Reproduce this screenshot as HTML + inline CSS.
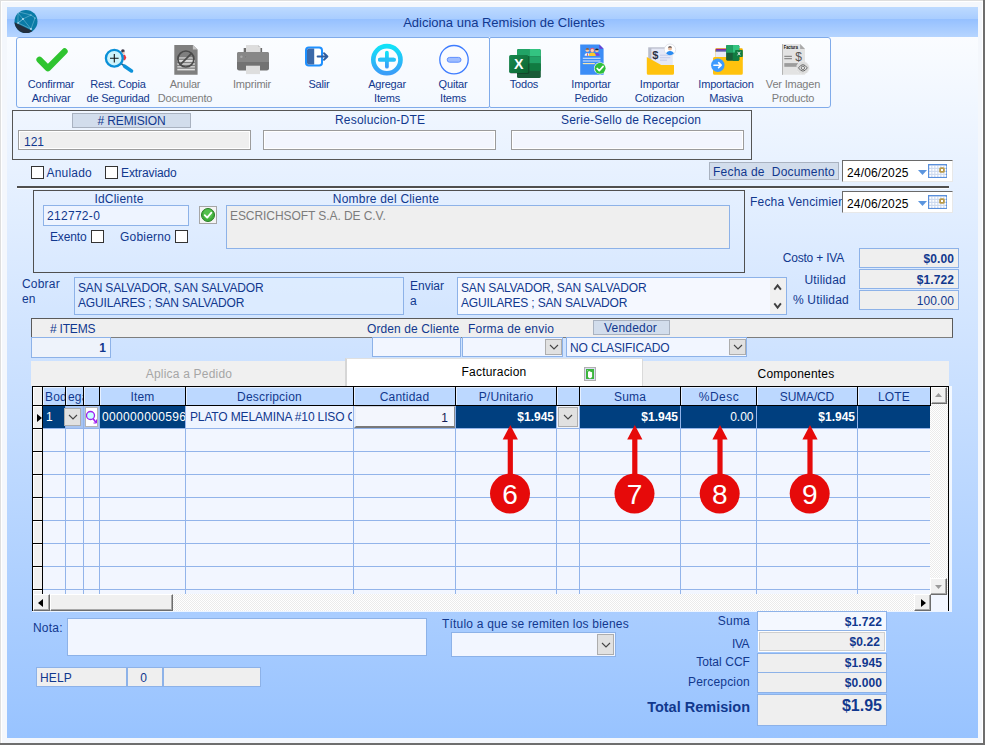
<!DOCTYPE html>
<html lang="es">
<head>
<meta charset="utf-8">
<title>Adiciona una Remision de Clientes</title>
<style>
*{box-sizing:border-box;margin:0;padding:0}
html,body{width:985px;height:745px;overflow:hidden;background:#f4f7fc}
body{position:relative;font-family:"Liberation Sans",Arial,sans-serif;font-size:12px;color:#11388e;line-height:14px}
.a{position:absolute}
.t{position:absolute;white-space:nowrap;letter-spacing:.2px}
.c{text-align:center}
.r{text-align:right}
.b{font-weight:bold}
.g{color:#7c7c7c}
.tb{position:absolute;top:77px;width:80px;font-size:11px;line-height:14px;text-align:center;white-space:nowrap;letter-spacing:-.2px}
.lbl{position:absolute;background:#d2ddec;border:1px solid #a9b2c0;text-align:center;white-space:nowrap;letter-spacing:.2px}
.fld{position:absolute;border:1px solid #8db2e8;background:#f2f6ff;white-space:nowrap;overflow:hidden}
.gry{background:#efefef}
.cb{position:absolute;width:13px;height:13px;background:#fff;border:1px solid #333}
.drop{position:absolute;background:#e1e1e1;border:1px solid #adadad}
.drop svg{position:absolute;left:50%;top:50%;margin:-3px 0 0 -5px}
.num{position:absolute;white-space:nowrap;text-align:right;font-weight:bold;letter-spacing:.1px}
.date{width:111px;height:22px;background:#fff;border:1px solid #6a6a6a;border-right-color:#e8e8e8;border-bottom-color:#e8e8e8;color:#000}
.date span{position:absolute;left:4px;top:5px;letter-spacing:.15px}
.date .tri{position:absolute;left:75px;top:9px;width:9px;height:5px;background:#5b95de;clip-path:polygon(0 0,100% 0,50% 100%)}
.date svg{position:absolute;left:85px;top:3px}
</style>
</head>
<body>
<!-- window frame -->
<div class="a" style="left:0;top:0;width:985px;height:745px;background:#f4f7fc"></div>
<div class="a" style="left:0;top:0;width:985px;height:1px;background:#dedede"></div>
<div class="a" style="left:0;top:0;width:1px;height:745px;background:#dedede"></div>
<div class="a" style="left:1px;top:1px;width:982px;height:1px;background:#fff"></div>
<div class="a" style="left:1px;top:1px;width:1px;height:742px;background:#fff"></div>
<div class="a" style="left:982px;top:1px;width:1px;height:742px;background:#fff"></div>
<div class="a" style="left:983px;top:0;width:2px;height:745px;background:#6e6e6e"></div>
<div class="a" style="left:0;top:743px;width:985px;height:2px;background:#6e6e6e"></div>
<!-- title bar -->
<div class="a" style="left:7px;top:7px;width:971px;height:30px;background:linear-gradient(#bddaff 0,#a9cdff 39%,#95c0ff 40%,#b6d5ff 100%)"></div>
<!-- body -->
<div class="a" id="bodybg" style="left:7px;top:37px;width:971px;height:701px;background:linear-gradient(#fafcff,#98c3ff)"></div>
<div class="t c" style="left:304px;top:15px;width:400px;font-size:13px;line-height:15px;letter-spacing:0">Adiciona una Remision de Clientes</div>
<!-- app icon -->
<svg class="a" style="left:13px;top:9px" width="26" height="26" viewBox="0 0 26 26">
<defs><clipPath id="gc"><circle cx="13" cy="12.5" r="11.5"/></clipPath></defs>
<circle cx="13" cy="12.5" r="11.5" fill="#0a7ba6"/>
<g clip-path="url(#gc)"><path d="M0 12.600 L20 22.200 L8 30 L-4 22Z" fill="#232f3e"/>
<g stroke="#9fd4ea" stroke-width=".6" fill="none" opacity=".7"><path d="M5 4L10 10L18 6L22 9L18 20L10 10L5 14L5 4M5 14L18 20M10 10L5 14M6 3L18 6"/></g>
<g fill="#bfe3f3"><circle cx="10" cy="10" r=".9"/><circle cx="5" cy="14" r=".8"/><circle cx="18" cy="20" r=".9"/><circle cx="18" cy="6" r=".6"/><circle cx="22" cy="9" r=".6"/></g></g>
</svg>
<!-- toolbar groups -->
<div class="a" style="left:16px;top:37px;width:474px;height:71px;border:1px solid #80abea;border-radius:3px 2px 2px 3px;background:rgba(255,255,255,.25)"></div>
<div class="a" style="left:489px;top:37px;width:342px;height:71px;border:1px solid #80abea;border-radius:2px 3px 3px 2px;background:rgba(255,255,255,.25)"></div>
<svg class="a" style="left:16px;top:40px" width="815" height="40" viewBox="16 40 815 40">
<defs>
<linearGradient id="gAdd" x1="0" y1="0" x2="0" y2="1"><stop offset="0" stop-color="#12e2f8"/><stop offset="1" stop-color="#3a9df8"/></linearGradient>
<linearGradient id="gXl" x1="0" y1="0" x2="1" y2="1"><stop offset="0" stop-color="#18884f"/><stop offset="1" stop-color="#0b6631"/></linearGradient>
</defs>
<!-- confirmar: check -->
<path d="M39.500 59.800L47.900 68.300L64.600 51.400" fill="none" stroke="#2fc430" stroke-width="6.200" stroke-linecap="round" stroke-linejoin="round"/>
<!-- rest copia: magnifier -->
<circle cx="122.900" cy="51.100" r="1.800" fill="#3b3547"/><circle cx="123.500" cy="52.900" r="1.200" fill="#e9c3b3"/><path d="M123.200 54.800h1.800l1.300 3l-1.300 2.400h-1.800z" fill="#e8383d"/>
<path d="M121.200 63.700L124.500 66" stroke="#17608f" stroke-width="1.600"/>
<path d="M124.600 66.200L131.500 70.900" stroke="#0d92da" stroke-width="3.600" stroke-linecap="round"/>
<circle cx="114.300" cy="58.200" r="8.400" fill="#cdf3fb" stroke="#0a90d8" stroke-width="2.300"/>
<path d="M110 58.200h8.600M114.300 53.900v8.600" stroke="#111" stroke-width="1.100"/>
<!-- anular documento -->
<path d="M174.300 45h18.600l4.700 4.600v25.200h-23.300z" fill="#7f7f7f"/>
<path d="M192.900 45l4.700 4.600h-4.700z" fill="#c4c4c4"/>
<g fill="#dedede"><rect x="178.500" y="57.400" width="15" height="1.100"/><rect x="177.300" y="59.900" width="17.600" height="2"/><rect x="177.300" y="63.300" width="17.600" height="1.400"/><rect x="177.300" y="66.200" width="17.600" height="1.300"/><rect x="177.300" y="68.800" width="17.600" height="1.600"/></g>
<circle cx="185.900" cy="59" r="8" fill="none" stroke="#4b4b4b" stroke-width="1.700"/><path d="M180.300 64.700L191.500 53.300" stroke="#4b4b4b" stroke-width="1.700"/>
<!-- imprimir -->
<rect x="243.700" y="48" width="18.400" height="5" fill="#6d6d6d"/>
<path d="M246 45h12l2.500 2v5h-14.500z" fill="#dddddd"/><path d="M258 45l2.500 2h-2.500z" fill="#c8c8c8"/>
<rect x="237" y="52" width="32" height="18.400" rx="2.200" fill="#727272"/>
<path d="M239.200 52h27.600a2.200 2.200 0 0 1 2.200 2.200v7.800h-32v-7.800a2.200 2.200 0 0 1 2.200-2.200z" fill="#878787"/>
<circle cx="241.400" cy="56.800" r="1.200" fill="#a9a9a9"/><circle cx="245.600" cy="56.800" r="1.100" fill="#7a7a7a" stroke="#959595" stroke-width=".4"/>
<rect x="246" y="65.700" width="14" height="8.400" fill="#dedede"/>
<!-- salir -->
<rect x="306" y="47.400" width="16" height="18.200" rx="2.800" fill="#fff" stroke="#1e90ff" stroke-width="2"/>
<path d="M307 50a2 2 0 0 1 2-1.600h5.200v16.200h-5.200a2 2 0 0 1-2-1.600z" fill="#3b69a9"/>
<path d="M317.600 56.500h9.200M324 53.200l3.400 3.300l-3.400 3.300" fill="none" stroke="#2f5d9f" stroke-width="1.900" stroke-linejoin="round" stroke-linecap="round"/>
<!-- agregar -->
<circle cx="386.900" cy="59.700" r="13.600" fill="#fbfdff" stroke="url(#gAdd)" stroke-width="4.600"/>
<path d="M379.900 59.700h14M386.900 52.700v14" stroke="url(#gAdd)" stroke-width="3.800" stroke-linecap="round"/>
<path d="M379.900 59.700h14" stroke="#27c0f8" stroke-width="3.800" stroke-linecap="round"/>
<!-- quitar -->
<circle cx="454" cy="59.700" r="14.200" fill="#f9fbff" stroke="#3d7cff" stroke-width="1.300"/>
<rect x="447.200" y="57.400" width="13.800" height="4.800" rx="2.400" fill="#9fbdff" stroke="#5e8fff" stroke-width="1"/>
<!-- todos: excel -->
<g>
<rect x="517" y="49.100" width="23.800" height="28.900" rx="1.600" fill="#185c37"/>
<path d="M518.600 49.100h10.900v7.200h-12.500v-5.600a1.600 1.600 0 0 1 1.600-1.600z" fill="#21a366"/>
<path d="M529.500 49.100h9.700a1.600 1.600 0 0 1 1.600 1.600v5.600h-11.300z" fill="#33c481"/>
<rect x="517" y="56.300" width="12.500" height="7.200" fill="#107c41"/>
<rect x="529.500" y="56.300" width="11.300" height="7.200" fill="#21a366"/>
<rect x="529.500" y="63.500" width="11.300" height="7.300" fill="#107c41"/>
<rect x="510" y="55.700" width="19.300" height="18.400" rx="1.600" fill="#000" opacity=".22"/>
<rect x="509.100" y="54.900" width="19.200" height="18.200" rx="1.600" fill="url(#gXl)"/>
<text x="518.700" y="69" font-family="Liberation Sans, Arial, sans-serif" font-weight="bold" font-size="14.200" fill="#fff" text-anchor="middle">X</text>
</g>
<!-- importar pedido -->
<path d="M580.200 44.600h19.100l4.300 4.200v25.900h-23.400z" fill="#3c8df6"/>
<path d="M599.300 44.600l4.300 4.200h-4.300z" fill="#6a3fd2"/>
<circle cx="587.400" cy="50.300" r="1.800" fill="#f0c8a8"/><path d="M585.600 49.800a1.800 1.800 0 0 1 3.600 0z" fill="#8a5a3a"/>
<path d="M584.600 55.800a2.800 2.800 0 0 1 5.600 0z" fill="#f4f4f4"/><rect x="587" y="53.300" width=".8" height="2.500" fill="#e23b3b"/>
<circle cx="596.900" cy="50.500" r="1.800" fill="#f0c8a8"/><path d="M595 50.300a1.900 1.900 0 0 1 3.800 0z" fill="#222"/>
<path d="M594.200 55.800a2.700 2.700 0 0 1 5.400 0z" fill="#7b3fe0"/>
<circle cx="592.300" cy="50" r="2.300" fill="#e0567a"/><circle cx="592.300" cy="50.400" r="1.600" fill="#f6d2b8"/>
<path d="M588.800 56a3.500 3.500 0 0 1 7 0z" fill="#ffc928"/>
<g stroke="#dfeaff" stroke-width="1.100"><path d="M582.800 58.300h17.700M582.800 61h17.700"/><path d="M582.800 63.600h12" stroke="#ffe9a8"/></g>
<circle cx="600.100" cy="68.300" r="6.100" fill="#fff"/><circle cx="600.100" cy="68.300" r="5.500" fill="#2fbf3a"/>
<path d="M597.200 68.500l2.100 2.200l3.800-4.300" fill="none" stroke="#fff" stroke-width="1.700" stroke-linecap="round" stroke-linejoin="round"/>
<!-- importar cotizacion -->
<path d="M648.200 47.300h24v20h-24z" fill="#b9bdcc"/>
<path d="M651.400 48.600h20.800v20h-20.800z" fill="#e5e8f6"/>
<text x="655.300" y="59.300" font-family="Liberation Sans, Arial, sans-serif" font-weight="bold" font-size="11" fill="#2c3244" text-anchor="middle">$</text>
<path d="M660 55.200h10.300M660 57.700h10.300M660 60.200h7" stroke="#c6cae9" stroke-width="1"/>
<path d="M646.800 57l14.400 8h12.800v8.200a1.500 1.500 0 0 1-1.500 1.500h-24.200a1.500 1.500 0 0 1-1.500-1.500z" fill="#ffc20e"/>
<circle cx="670" cy="49.700" r="5.700" fill="#fff" stroke="#d5d8e2" stroke-width=".7"/>
<path d="M666.200 53.600a3.900 3.300 0 0 1 7.600 0a5.300 5.300 0 0 1-7.600 0z" fill="#2b8cf2"/>
<circle cx="670" cy="48.600" r="2" fill="#ecc0a2"/><path d="M667.900 48.300a2.100 2.100 0 0 1 4.200 0l-.5-.8h-3.200z" fill="#2b2b33"/>
<!-- importacion masiva -->
<path d="M716.500 48.200h25a1.300 1.300 0 0 1 1.300 1.300v10h-27.600v-10a1.300 1.300 0 0 1 1.300-1.300z" fill="#f2b200"/>
<rect x="715.800" y="48.800" width="12" height="1.500" fill="#8a21a8"/><rect x="715.600" y="50.200" width="12" height="1.600" fill="#3c52cc"/><rect x="715.300" y="51.700" width="12.500" height="6.500" fill="#e9ebf7"/>
<path d="M713 58.500a1.500 1.500 0 0 1 1.500-1.500h12l2-2.500h12.800a1.500 1.500 0 0 1 1.500 1.500v17.200a1.500 1.500 0 0 1-1.500 1.500h-26.800a1.500 1.500 0 0 1-1.500-1.500z" fill="#ffc20e"/>
<rect x="726.100" y="44.900" width="13.200" height="15.800" rx="1.400" fill="#185c37"/>
<path d="M727.500 44.900h5.200v7.900h-6.600v-6.500a1.400 1.400 0 0 1 1.400-1.400z" fill="#21a366"/>
<path d="M732.700 44.900h5.200a1.400 1.400 0 0 1 1.400 1.400v6.500h-6.600z" fill="#33c481"/>
<rect x="732.700" y="52.800" width="6.600" height="7.900" rx="1" fill="#107c41"/>
<rect x="735.100" y="50" width="7.700" height="7" rx=".8" fill="#107c41"/>
<path d="M737.600 51.800l2.700 3.500M740.300 51.800l-2.700 3.500" stroke="#fff" stroke-width=".9"/>
<circle cx="717.800" cy="65.200" r="6.700" fill="#3d9bff"/>
<path d="M713.900 65.200h7M718.600 62.700l2.600 2.500l-2.600 2.500" fill="none" stroke="#fff" stroke-width="1.600" stroke-linecap="round" stroke-linejoin="round"/>
<!-- ver imagen producto -->
<path d="M782 44.100h18.100l4.900 5v25.700h-23z" fill="#e3e3e3"/>
<rect x="782" y="44.100" width="1" height="30.700" fill="#b4b4b4"/>
<path d="M800.100 44.100l4.900 5h-4.900z" fill="#a9a9a9"/>
<text x="783.800" y="48.900" font-family="Liberation Sans, Arial, sans-serif" font-weight="bold" font-size="4.600" fill="#111" textLength="14" lengthAdjust="spacingAndGlyphs">Factura</text>
<path d="M784.300 56.300h7.600M784.300 58.700h7.600" stroke="#8c8c8c" stroke-width="1.200"/>
<text x="798.500" y="61.300" font-family="Liberation Sans, Arial, sans-serif" font-size="12" fill="#555" text-anchor="middle">$</text>
<rect x="784.300" y="63.100" width="13.500" height="3.700" fill="#9c9c9c"/>
<circle cx="802.900" cy="67.900" r="6.300" fill="#dcdcdc" stroke="#ececec" stroke-width="1" stroke-dasharray="2 1.500"/>
<path d="M798.500 67.900q4.400-6.400 8.800 0q-4.400 6.400-8.800 0z" fill="#e6e6e6" stroke="#5a5a5a" stroke-width=".9"/><circle cx="802.900" cy="67.900" r="1.700" fill="none" stroke="#5a5a5a" stroke-width=".8"/>
</svg>

<!-- toolbar labels -->
<div class="tb" style="left:11px">Confirmar<br>Archivar</div>
<div class="tb" style="left:78px">Rest. Copia<br>de Seguridad</div>
<div class="tb g" style="left:145px">Anular<br>Documento</div>
<div class="tb g" style="left:212px">Imprimir</div>
<div class="tb" style="left:279px">Salir</div>
<div class="tb" style="left:347px">Agregar<br>Items</div>
<div class="tb" style="left:413px">Quitar<br>Items</div>
<div class="tb" style="left:484px">Todos</div>
<div class="tb" style="left:551px">Importar<br>Pedido</div>
<div class="tb" style="left:619.500px">Importar<br>Cotizacion</div>
<div class="tb" style="left:686px">Importacion<br>Masiva</div>
<div class="tb g" style="left:753px">Ver Imagen<br>Producto</div>
<!-- header panel -->
<div class="a" style="left:12px;top:110px;width:740px;height:50px;border:1px solid #555"></div>
<div class="lbl" style="left:72px;top:113px;width:119px;height:15px;line-height:14px;letter-spacing:-.15px"># REMISION</div>
<div class="fld gry" style="left:18px;top:130px;width:233px;height:20px;border-color:#9c9c9c;box-shadow:inset 0 0 0 1px #fff;padding:4px 0 0 5px">121</div>
<div class="t" style="left:335px;top:113px">Resolucion-DTE</div>
<div class="fld" style="left:263px;top:130px;width:233px;height:20px;border-color:#9c9c9c;box-shadow:inset 0 0 0 1px #fff;background:#f3f6fe"></div>
<div class="t" style="left:561px;top:113px">Serie-Sello de Recepcion</div>
<div class="fld" style="left:511px;top:130px;width:233px;height:20px;border-color:#9c9c9c;box-shadow:inset 0 0 0 1px #fff;background:#f3f6fe"></div>
<!-- checkboxes -->
<div class="cb" style="left:31px;top:166px"></div><div class="t" style="left:46.500px;top:166px">Anulado</div>
<div class="cb" style="left:105px;top:166px"></div><div class="t" style="left:121px;top:166px;letter-spacing:-.1px">Extraviado</div>
<!-- fecha documento -->
<div class="lbl" style="left:709px;top:162px;width:130px;height:18px;line-height:19px">Fecha de&nbsp; Documento</div>
<div class="a date" style="left:842px;top:160px"><span>24/06/2025</span><b class="tri"></b><svg width="19" height="14" viewBox="0 0 19 14"><rect x=".6" y=".6" width="17.800" height="12.800" fill="#ccd9ef" stroke="#5a90dc" stroke-width="1.200"/><g fill="#fff"><rect x="1.4" y="1.9" width="1.900" height="1.900"/><rect x="1.4" y="4.9" width="1.900" height="1.900"/><rect x="1.4" y="7.9" width="1.900" height="1.900"/><rect x="1.4" y="10.9" width="1.900" height="1.900"/><rect x="4.4" y="1.9" width="1.900" height="1.900"/><rect x="4.4" y="4.9" width="1.900" height="1.900"/><rect x="4.4" y="7.9" width="1.900" height="1.900"/><rect x="4.4" y="10.9" width="1.900" height="1.900"/><rect x="7.4" y="1.9" width="1.900" height="1.900"/><rect x="7.4" y="4.9" width="1.900" height="1.900"/><rect x="7.4" y="7.9" width="1.900" height="1.900"/><rect x="7.4" y="10.9" width="1.900" height="1.900"/><rect x="10.4" y="1.9" width="1.900" height="1.900"/><rect x="10.4" y="4.9" width="1.900" height="1.900"/><rect x="10.4" y="7.9" width="1.900" height="1.900"/><rect x="10.4" y="10.9" width="1.900" height="1.900"/><rect x="13.4" y="1.9" width="1.900" height="1.900"/><rect x="13.4" y="4.9" width="1.900" height="1.900"/><rect x="13.4" y="7.9" width="1.900" height="1.900"/><rect x="13.4" y="10.9" width="1.900" height="1.900"/><rect x="16.4" y="1.9" width="1.900" height="1.900"/><rect x="16.4" y="4.9" width="1.900" height="1.900"/><rect x="16.4" y="7.9" width="1.900" height="1.900"/><rect x="16.4" y="10.9" width="1.900" height="1.900"/></g><rect x="11.200" y="3.200" width="5.600" height="5.600" rx="1.600" fill="#b8994a"/><rect x="13" y="5" width="2" height="2" fill="#fff"/></svg></div>
<!-- separator line -->
<div class="a" style="left:17px;top:186px;width:932px;height:2px;background:#4f4f4f"></div>
<div class="a" style="left:17px;top:188px;width:932px;height:1px;background:rgba(255,255,255,.8)"></div>
<!-- fecha vencimiento -->
<div class="t" style="left:750px;top:195px;width:92px;overflow:hidden">Fecha Vencimiento</div>
<div class="a date" style="left:842px;top:191px"><span>24/06/2025</span><b class="tri"></b><svg width="19" height="14" viewBox="0 0 19 14"><rect x=".6" y=".6" width="17.800" height="12.800" fill="#ccd9ef" stroke="#5a90dc" stroke-width="1.200"/><g fill="#fff"><rect x="1.4" y="1.9" width="1.900" height="1.900"/><rect x="1.4" y="4.9" width="1.900" height="1.900"/><rect x="1.4" y="7.9" width="1.900" height="1.900"/><rect x="1.4" y="10.9" width="1.900" height="1.900"/><rect x="4.4" y="1.9" width="1.900" height="1.900"/><rect x="4.4" y="4.9" width="1.900" height="1.900"/><rect x="4.4" y="7.9" width="1.900" height="1.900"/><rect x="4.4" y="10.9" width="1.900" height="1.900"/><rect x="7.4" y="1.9" width="1.900" height="1.900"/><rect x="7.4" y="4.9" width="1.900" height="1.900"/><rect x="7.4" y="7.9" width="1.900" height="1.900"/><rect x="7.4" y="10.9" width="1.900" height="1.900"/><rect x="10.4" y="1.9" width="1.900" height="1.900"/><rect x="10.4" y="4.9" width="1.900" height="1.900"/><rect x="10.4" y="7.9" width="1.900" height="1.900"/><rect x="10.4" y="10.9" width="1.900" height="1.900"/><rect x="13.4" y="1.9" width="1.900" height="1.900"/><rect x="13.4" y="4.9" width="1.900" height="1.900"/><rect x="13.4" y="7.9" width="1.900" height="1.900"/><rect x="13.4" y="10.9" width="1.900" height="1.900"/><rect x="16.4" y="1.9" width="1.900" height="1.900"/><rect x="16.4" y="4.9" width="1.900" height="1.900"/><rect x="16.4" y="7.9" width="1.900" height="1.900"/><rect x="16.4" y="10.9" width="1.900" height="1.900"/></g><rect x="11.200" y="3.200" width="5.600" height="5.600" rx="1.600" fill="#b8994a"/><rect x="13" y="5" width="2" height="2" fill="#fff"/></svg></div>
<!-- client panel -->
<div class="a" style="left:33px;top:190px;width:712px;height:83px;border:1px solid #4f4f4f"></div>
<div class="t c" style="left:69px;top:192px;width:100px">IdCliente</div>
<div class="fld" style="left:43px;top:205px;width:146px;height:21px;background:#eef4ff;padding:3px 0 0 3px;letter-spacing:.3px">212772-0</div>
<div class="a" style="left:199px;top:206px;width:18px;height:18px;background:#f4f4f4;border:1px solid #a6a6a6"><svg width="16" height="16" viewBox="0 0 16 16"><circle cx="8" cy="8" r="6.500" fill="#3fae3a" stroke="#2a7d27" stroke-width="1"/><circle cx="8" cy="7" r="4.800" fill="#62c95a" opacity=".6"/><path d="M4.700 8.200L7.200 10.600L11.400 5.600" stroke="#fff" stroke-width="1.800" fill="none" stroke-linecap="round" stroke-linejoin="round"/></svg></div>
<div class="t" style="left:50px;top:230px;letter-spacing:-.15px">Exento</div><div class="cb" style="left:91px;top:230px"></div>
<div class="t" style="left:120px;top:230px">Gobierno</div><div class="cb" style="left:175px;top:230px"></div>
<div class="t c" style="left:286px;top:192px;width:200px">Nombre del Cliente</div>
<div class="fld gry g" style="left:226px;top:205px;width:504px;height:44px;padding:3px 0 0 3px;letter-spacing:-.07px">ESCRICHSOFT S.A. DE C.V.</div>
<!-- costo / utilidad -->
<div class="t r" style="left:744px;top:251px;width:100px;letter-spacing:-.2px">Costo + IVA</div>
<div class="fld gry" style="left:859px;top:248px;width:100px;height:20px"><div class="num" style="right:4px;top:3px">$0.00</div></div>
<div class="t r" style="left:746px;top:273px;width:100px">Utilidad</div>
<div class="fld gry" style="left:859px;top:269px;width:100px;height:20px"><div class="num" style="right:4px;top:3px">$1.722</div></div>
<div class="t r" style="left:749px;top:293px;width:100px">% Utilidad</div>
<div class="fld gry" style="left:859px;top:290px;width:100px;height:20px"><div class="num" style="right:4px;top:3px;font-weight:normal">100.00</div></div>
<!-- addresses -->
<div class="t" style="left:22px;top:277px;line-height:15px">Cobrar<br>en</div>
<div class="fld" style="left:74px;top:277px;width:330px;height:38px;background:rgba(225,238,255,.55);padding:3px 0 0 3px;line-height:15px;letter-spacing:-.17px">SAN SALVADOR, SAN SALVADOR<br>AGUILARES ; SAN SALVADOR</div>
<div class="t" style="left:410px;top:279px;line-height:15px;letter-spacing:0">Enviar<br>a</div>
<div class="fld" style="left:457px;top:277px;width:330px;height:38px;background:#f5f8ff;padding:3px 0 0 3px;line-height:15px;letter-spacing:-.17px">SAN SALVADOR, SAN SALVADOR<br>AGUILARES ; SAN SALVADOR</div>
<div class="a" style="left:770px;top:278px;width:16px;height:36px;background:#f0f0f0"></div><svg class="a" style="left:772px;top:282px" width="12" height="29" viewBox="772 282 12 29"><path d="M774.300 289.700L777.600 285.400L780.900 289.700M774.300 303.300L777.600 307.600L780.900 303.300" stroke="#404040" stroke-width="1.900" fill="none"/></svg>
<!-- items bar -->
<div class="a" style="left:31px;top:318px;width:922px;height:20px;background:#efefef;border:1px solid #5a5a5a;border-bottom-color:#7d7d7d"></div>
<div class="t" style="left:50px;top:322px;letter-spacing:-.2px"># ITEMS</div>
<div class="t" style="left:367px;top:322px;letter-spacing:.1px">Orden de Cliente</div>
<div class="t" style="left:468px;top:322px">Forma de envio</div>
<div class="lbl" style="left:593px;top:320px;width:77px;height:15px;line-height:14px;padding-right:2px">Vendedor</div>
<div class="fld" style="left:31px;top:337px;width:80px;height:21px;background:#eef3fb"><div class="num" style="right:4px;top:3px">1</div></div>
<div class="fld" style="left:372px;top:337px;width:89px;height:20px;background:#f2f6ff"></div>
<div class="fld" style="left:462px;top:337px;width:101px;height:20px;background:#f2f6ff"></div>
<div class="drop" style="left:545px;top:339px;width:17px;height:16px"><svg width="10" height="6" viewBox="0 0 10 6"><path d="M1 1L5 5L9 1" stroke="#444" fill="none" stroke-width="1.100"/></svg></div>
<div class="fld" style="left:566px;top:337px;width:181px;height:20px;background:#f2f6ff;padding:3px 0 0 3px;letter-spacing:-.13px">NO CLASIFICADO</div>
<div class="drop" style="left:729px;top:339px;width:17px;height:16px"><svg width="10" height="6" viewBox="0 0 10 6"><path d="M1 1L5 5L9 1" stroke="#444" fill="none" stroke-width="1.100"/></svg></div>
<!-- tabs -->
<div class="a" style="left:31px;top:361px;width:918px;height:25px;background:#f0f0f0"></div>
<div class="a" style="left:345px;top:358px;width:298px;height:28px;background:#fff;border-top:1px solid #e0e0e0;border-left:2px solid #d6d6d6;border-right:1px solid #dadada"></div>
<div class="t c" style="left:89px;top:367px;width:200px;color:#a6a6a6">Aplica a Pedido</div>
<div class="t c" style="left:394px;top:365px;width:200px;color:#000">Facturacion</div>
<div class="t c" style="left:696px;top:367px;width:200px;color:#000">Componentes</div>
<svg class="a" style="left:584px;top:367px" width="12" height="14" viewBox="0 0 12 14"><rect x=".5" y=".5" width="11" height="13" fill="#dcdcf4" stroke="#b0b0b0"/><rect x="2" y="2" width="8" height="10" fill="#3db53d"/><path d="M4 5l1.500-1l1 .8l1.600 .4v4.800l-1.500 1.200h-1.300l-1.300-1.300z" fill="#fff"/><path d="M3.200 3.300l1.400 1.200" stroke="#bfe8bf" stroke-width=".8"/></svg>
<!-- grid -->
<div class="a" id="grid" style="left:32px;top:386px;width:917px;height:225px;background:#f2f6ff;overflow:hidden">
<div class="a" style="left:11px;top:1px;width:887px;height:18px;background:#bcd8ff"></div>
<div class="a" style="left:11px;top:20px;width:887px;height:22px;background:#003f7f"></div>
<div class="a" style="left:11px;top:42px;width:887px;height:1px;background:#93b4ea"></div>
<div class="a" style="left:11px;top:65px;width:887px;height:1px;background:#93b4ea"></div>
<div class="a" style="left:11px;top:88px;width:887px;height:1px;background:#93b4ea"></div>
<div class="a" style="left:11px;top:111px;width:887px;height:1px;background:#93b4ea"></div>
<div class="a" style="left:11px;top:134px;width:887px;height:1px;background:#93b4ea"></div>
<div class="a" style="left:11px;top:157px;width:887px;height:1px;background:#93b4ea"></div>
<div class="a" style="left:11px;top:180px;width:887px;height:1px;background:#93b4ea"></div>
<div class="a" style="left:11px;top:203px;width:887px;height:1px;background:#93b4ea"></div>
<div class="a" style="left:33px;top:20px;width:1px;height:188px;background:#93b4ea"></div>
<div class="a" style="left:51px;top:20px;width:1px;height:188px;background:#93b4ea"></div>
<div class="a" style="left:67px;top:20px;width:1px;height:188px;background:#93b4ea"></div>
<div class="a" style="left:153px;top:20px;width:1px;height:188px;background:#93b4ea"></div>
<div class="a" style="left:321px;top:20px;width:1px;height:188px;background:#93b4ea"></div>
<div class="a" style="left:423px;top:20px;width:1px;height:188px;background:#93b4ea"></div>
<div class="a" style="left:524px;top:20px;width:1px;height:188px;background:#93b4ea"></div>
<div class="a" style="left:547px;top:20px;width:1px;height:188px;background:#93b4ea"></div>
<div class="a" style="left:648px;top:20px;width:1px;height:188px;background:#93b4ea"></div>
<div class="a" style="left:724px;top:20px;width:1px;height:188px;background:#93b4ea"></div>
<div class="a" style="left:825px;top:20px;width:1px;height:188px;background:#93b4ea"></div>
<div class="a" style="left:1px;top:1px;width:9px;height:207px;background:#f0f0f0"></div>
<div class="a" style="left:1px;top:1px;width:1px;height:207px;background:#fff"></div>
<div class="a" style="left:1px;top:19px;width:9px;height:1px;background:#000"></div>
<div class="a" style="left:1px;top:20px;width:9px;height:1px;background:#fff"></div>
<div class="a" style="left:1px;top:42px;width:9px;height:1px;background:#000"></div>
<div class="a" style="left:1px;top:43px;width:9px;height:1px;background:#fff"></div>
<div class="a" style="left:1px;top:65px;width:9px;height:1px;background:#000"></div>
<div class="a" style="left:1px;top:66px;width:9px;height:1px;background:#fff"></div>
<div class="a" style="left:1px;top:88px;width:9px;height:1px;background:#000"></div>
<div class="a" style="left:1px;top:89px;width:9px;height:1px;background:#fff"></div>
<div class="a" style="left:1px;top:111px;width:9px;height:1px;background:#000"></div>
<div class="a" style="left:1px;top:112px;width:9px;height:1px;background:#fff"></div>
<div class="a" style="left:1px;top:134px;width:9px;height:1px;background:#000"></div>
<div class="a" style="left:1px;top:135px;width:9px;height:1px;background:#fff"></div>
<div class="a" style="left:1px;top:157px;width:9px;height:1px;background:#000"></div>
<div class="a" style="left:1px;top:158px;width:9px;height:1px;background:#fff"></div>
<div class="a" style="left:1px;top:180px;width:9px;height:1px;background:#000"></div>
<div class="a" style="left:1px;top:181px;width:9px;height:1px;background:#fff"></div>
<div class="a" style="left:1px;top:203px;width:9px;height:1px;background:#000"></div>
<div class="a" style="left:1px;top:204px;width:9px;height:1px;background:#fff"></div>
<div class="a" style="left:1px;top:1px;width:9px;height:1px;background:#fff"></div>
<div class="a" style="left:10px;top:1px;width:1px;height:207px;background:#000"></div>
<div class="a" style="left:11px;top:1px;width:887px;height:1px;background:#e6f0ff"></div>
<div class="a" style="left:33px;top:1px;width:1px;height:18px;background:#000"></div>
<div class="a" style="left:34px;top:1px;width:1px;height:18px;background:#e6f0ff"></div>
<div class="a" style="left:51px;top:1px;width:1px;height:18px;background:#000"></div>
<div class="a" style="left:52px;top:1px;width:1px;height:18px;background:#e6f0ff"></div>
<div class="a" style="left:67px;top:1px;width:1px;height:18px;background:#000"></div>
<div class="a" style="left:68px;top:1px;width:1px;height:18px;background:#e6f0ff"></div>
<div class="a" style="left:153px;top:1px;width:1px;height:18px;background:#000"></div>
<div class="a" style="left:154px;top:1px;width:1px;height:18px;background:#e6f0ff"></div>
<div class="a" style="left:321px;top:1px;width:1px;height:18px;background:#000"></div>
<div class="a" style="left:322px;top:1px;width:1px;height:18px;background:#e6f0ff"></div>
<div class="a" style="left:423px;top:1px;width:1px;height:18px;background:#000"></div>
<div class="a" style="left:424px;top:1px;width:1px;height:18px;background:#e6f0ff"></div>
<div class="a" style="left:524px;top:1px;width:1px;height:18px;background:#000"></div>
<div class="a" style="left:525px;top:1px;width:1px;height:18px;background:#e6f0ff"></div>
<div class="a" style="left:547px;top:1px;width:1px;height:18px;background:#000"></div>
<div class="a" style="left:548px;top:1px;width:1px;height:18px;background:#e6f0ff"></div>
<div class="a" style="left:648px;top:1px;width:1px;height:18px;background:#000"></div>
<div class="a" style="left:649px;top:1px;width:1px;height:18px;background:#e6f0ff"></div>
<div class="a" style="left:724px;top:1px;width:1px;height:18px;background:#000"></div>
<div class="a" style="left:725px;top:1px;width:1px;height:18px;background:#e6f0ff"></div>
<div class="a" style="left:825px;top:1px;width:1px;height:18px;background:#000"></div>
<div class="a" style="left:826px;top:1px;width:1px;height:18px;background:#e6f0ff"></div>
<div class="a" style="left:898px;top:1px;width:1px;height:18px;background:#000"></div>
<div class="a" style="left:11px;top:1px;width:1px;height:18px;background:#e6f0ff"></div>
<div class="a" style="left:11px;top:19px;width:887px;height:1px;background:#000"></div>
<div class="t" style="left:13px;top:4px;width:20px;overflow:hidden">Bodega</div>
<div class="t" style="left:36px;top:4px;width:15px;overflow:hidden">ega</div>
<div class="t c" style="left:68px;top:4px;width:85px">Item</div>
<div class="t c" style="left:154px;top:4px;width:167px">Descripcion</div>
<div class="t c" style="left:322px;top:4px;width:101px">Cantidad</div>
<div class="t c" style="left:424px;top:4px;width:100px">P/Unitario</div>
<div class="t c" style="left:548px;top:4px;width:100px">Suma</div>
<div class="t c" style="left:649px;top:4px;width:76px;letter-spacing:.45px">%Desc</div>
<div class="t c" style="left:725px;top:4px;width:100px;letter-spacing:-.15px">SUMA/CD</div>
<div class="t c" style="left:826px;top:4px;width:72px">LOTE</div>
<svg class="a" style="left:5px;top:28px" width="5" height="8" viewBox="0 0 5 8"><path d="M0 0L5 4L0 8Z" fill="#000"/></svg>
<div class="t" style="left:14px;top:24px;color:#fff">1</div>
<div class="a" style="left:34px;top:20px;width:17px;height:22px;background:#a7c4f2"></div>
<div class="drop" style="left:32px;top:22px;width:17px;height:18px"><svg width="10" height="6" viewBox="0 0 10 6"><path d="M1 1L5 5L9 1" stroke="#444" fill="none" stroke-width="1.100"/></svg></div>
<div class="a" style="left:52px;top:20px;width:15px;height:22px;background:#a7c4f2"></div>
<div class="a" style="left:53px;top:21px;width:13px;height:20px;background:#fff;border:1px solid #b4b4b4"><svg width="11" height="18" viewBox="0 0 11 18"><circle cx="4.500" cy="7.500" r="4" fill="#c8ffff" stroke="#a020f0" stroke-width="1.300"/><path d="M7 10.500L10 14.500" stroke="#a020f0" stroke-width="1.500"/><path d="M10.500 11.500v3.500h-3" stroke="#a020f0" stroke-width="1" fill="none"/></svg></div>
<div class="t" style="left:70px;top:24px;width:83px;overflow:hidden;color:#fff;letter-spacing:.35px">000000000596</div>
<div class="a" style="left:154px;top:20px;width:167px;height:22px;background:#eef4ff"></div>
<div class="t" style="left:158px;top:24px;width:162px;overflow:hidden;letter-spacing:-.14px">PLATO MELAMINA #10 LISO O</div>
<div class="a" style="left:322px;top:20px;width:101px;height:22px;background:#f3f6fd;border-top:1px solid #cfd4de;border-left:2px solid #e9effa;border-right:1px solid #8c8c8c;border-bottom:2px solid #787878"></div>
<div class="t r" style="left:322px;top:25px;width:94px;color:#121c55">1</div>
<div class="t r" style="left:442px;top:24px;width:80px;color:#fff;font-weight:bold;letter-spacing:0">$1.945</div>
<div class="t r" style="left:566px;top:24px;width:80px;color:#fff;font-weight:bold;letter-spacing:0">$1.945</div>
<div class="t r" style="left:641.5px;top:24px;width:80px;color:#fff;letter-spacing:0">0.00</div>
<div class="t r" style="left:743px;top:24px;width:80px;color:#fff;font-weight:bold;letter-spacing:0">$1.945</div>
<div class="a" style="left:525px;top:20px;width:22px;height:22px;background:#f1f5fd"></div>
<div class="drop" style="left:526px;top:21px;width:20px;height:20px"><svg width="10" height="6" viewBox="0 0 10 6"><path d="M1 1L5 5L9 1" stroke="#444" fill="none" stroke-width="1.100"/></svg></div>
<div class="a" style="left:898px;top:1px;width:18px;height:207px;background:#fff;background-image:linear-gradient(45deg,#ebebeb 25%,transparent 25%,transparent 75%,#ebebeb 75%),linear-gradient(45deg,#ebebeb 25%,transparent 25%,transparent 75%,#ebebeb 75%);background-size:2px 2px;background-position:0 0,1px 1px"></div>
<div class="a" style="left:1px;top:208px;width:897px;height:17px;background:#fff;background-image:linear-gradient(45deg,#ebebeb 25%,transparent 25%,transparent 75%,#ebebeb 75%),linear-gradient(45deg,#ebebeb 25%,transparent 25%,transparent 75%,#ebebeb 75%);background-size:2px 2px;background-position:0 0,1px 1px"></div>
<div class="a" style="left:898px;top:1px;width:1px;height:19px;background:#000"></div>
<div class="a" style="left:899px;top:1px;width:16px;height:17px;background:#f0f0f0;border:1px solid #fff;border-right-color:#6d6d6d;border-bottom-color:#6d6d6d;box-shadow:inset -1px -1px 0 #a8a8a8"><svg class="a" style="left:3px;top:5px" width="7" height="4" viewBox="0 0 7 4"><path d="M0 4L3.500 0L7 4Z" fill="#9a9a9a"/></svg></div>
<div class="a" style="left:898px;top:192px;width:17px;height:17px;background:#f0f0f0;border:1px solid #fff;border-right-color:#6d6d6d;border-bottom-color:#6d6d6d;box-shadow:inset -1px -1px 0 #a8a8a8"><svg class="a" style="left:4px;top:6px" width="7" height="4" viewBox="0 0 7 4"><path d="M0 0L3.500 4L7 0Z" fill="#9a9a9a"/></svg></div>
<div class="a" style="left:1px;top:208px;width:17px;height:17px;background:#f0f0f0;border:1px solid #fff;border-right-color:#6d6d6d;border-bottom-color:#6d6d6d;box-shadow:inset -1px -1px 0 #a8a8a8"><svg class="a" style="left:4px;top:4px" width="5" height="8" viewBox="0 0 5 8"><path d="M5 0L0 4L5 8Z" fill="#000"/></svg></div>
<div class="a" style="left:18px;top:208px;width:123px;height:17px;background:#f0f0f0;border:1px solid #fff;border-right-color:#6d6d6d;border-bottom-color:#6d6d6d;box-shadow:inset -1px -1px 0 #a8a8a8"></div>
<div class="a" style="left:882px;top:208px;width:17px;height:17px;background:#f0f0f0;border:1px solid #fff;border-right-color:#6d6d6d;border-bottom-color:#6d6d6d;box-shadow:inset -1px -1px 0 #a8a8a8"><svg class="a" style="left:6px;top:4px" width="5" height="8" viewBox="0 0 5 8"><path d="M0 0L5 4L0 8Z" fill="#000"/></svg></div>
<div class="a" style="left:899px;top:209px;width:17px;height:16px;background:#f2f6ff"></div>
<div class="a" style="left:0;top:0;width:917px;height:1px;background:#000"></div>
<div class="a" style="left:0;top:0;width:1px;height:225px;background:#000"></div>
<div class="a" style="left:916px;top:0;width:1px;height:225px;background:#000"></div>
</div>
<div class="a" style="left:949px;top:386px;width:3px;height:226px;background:rgba(255,255,255,.8)"></div><div class="a" style="left:32px;top:611px;width:917px;height:1px;background:rgba(255,255,255,.8)"></div>
<!-- annotations -->
<svg class="a" style="left:480px;top:420px" width="360" height="100" viewBox="480 420 360 100" font-family="Liberation Sans, Arial, sans-serif" font-size="28" text-anchor="middle" fill="#fff">
<path d="M510.3 425L517.9 439.6H512.9V480H507.7V439.6H502.7Z" fill="#e60a0a"/><circle cx="510.0" cy="493.600" r="20" fill="#e60a0a"/><text x="510.0" y="503.700">6</text>
<path d="M634.8 425L642.4 439.6H637.4V480H632.1999999999999V439.6H627.1999999999999Z" fill="#e60a0a"/><circle cx="634.5" cy="493.600" r="20" fill="#e60a0a"/><text x="634.5" y="503.700">7</text>
<path d="M720 425L727.6 439.6H722.6V480H717.4V439.6H712.4Z" fill="#e60a0a"/><circle cx="719.7" cy="493.600" r="20" fill="#e60a0a"/><text x="719.7" y="503.700">8</text>
<path d="M810 425L817.6 439.6H812.6V480H807.4V439.6H802.4Z" fill="#e60a0a"/><circle cx="809.7" cy="493.600" r="20" fill="#e60a0a"/><text x="809.7" y="503.700">9</text>
</svg>
<!-- bottom -->
<div class="t" style="left:33px;top:621px">Nota:</div>
<div class="fld" style="left:67px;top:618px;width:360px;height:38px;background:#f2f6ff"></div>
<div class="t" style="left:442px;top:617px;letter-spacing:.2px">Título a que se remiten los bienes</div>
<div class="fld" style="left:451px;top:632px;width:165px;height:25px;background:#f2f6ff"></div>
<div class="drop" style="left:597px;top:634px;width:17px;height:21px"><svg width="10" height="6" viewBox="0 0 10 6"><path d="M1 1L5 5L9 1" stroke="#444" fill="none" stroke-width="1.100"/></svg></div>
<div class="fld gry" style="left:36px;top:667px;width:91px;height:20px;padding:3px 0 0 3px;letter-spacing:.15px">HELP</div>
<div class="fld gry c" style="left:127px;top:667px;width:36px;height:20px;padding:3px 3px 0 0">0</div>
<div class="fld gry" style="left:163px;top:667px;width:98px;height:20px"></div>
<div class="t r" style="left:650px;top:614px;width:100px">Suma</div>
<div class="t r" style="left:649px;top:637px;width:100px;letter-spacing:-.5px">IVA</div>
<div class="t r" style="left:650px;top:655px;width:100px;letter-spacing:.05px">Total CCF</div>
<div class="t r" style="left:650px;top:675px;width:100px">Percepcion</div>
<div class="t r b" style="left:600px;top:699px;width:150px;font-size:14.500px;line-height:17px;letter-spacing:0">Total Remision</div>
<div class="fld" style="left:757px;top:611px;width:130px;height:20px;background:#f4f8ff"><div class="num" style="right:4px;top:3px">$1.722</div></div>
<div class="fld gry" style="left:758px;top:631px;width:128px;height:21px;border:1px solid #fff;box-shadow:inset 0 0 0 1px #cfcfcf"><div class="num" style="right:5px;top:3px">$0.22</div></div>
<div class="fld gry" style="left:757px;top:653px;width:130px;height:20px"><div class="num" style="right:4px;top:2px">$1.945</div></div>
<div class="fld gry" style="left:757px;top:672px;width:130px;height:21px"><div class="num" style="right:4px;top:3px">$0.000</div></div>
<div class="fld gry" style="left:757px;top:694px;width:130px;height:32px"><div class="num" style="right:4px;top:2px;font-size:16px;line-height:18px;letter-spacing:0">$1.95</div></div>


</body>
</html>
